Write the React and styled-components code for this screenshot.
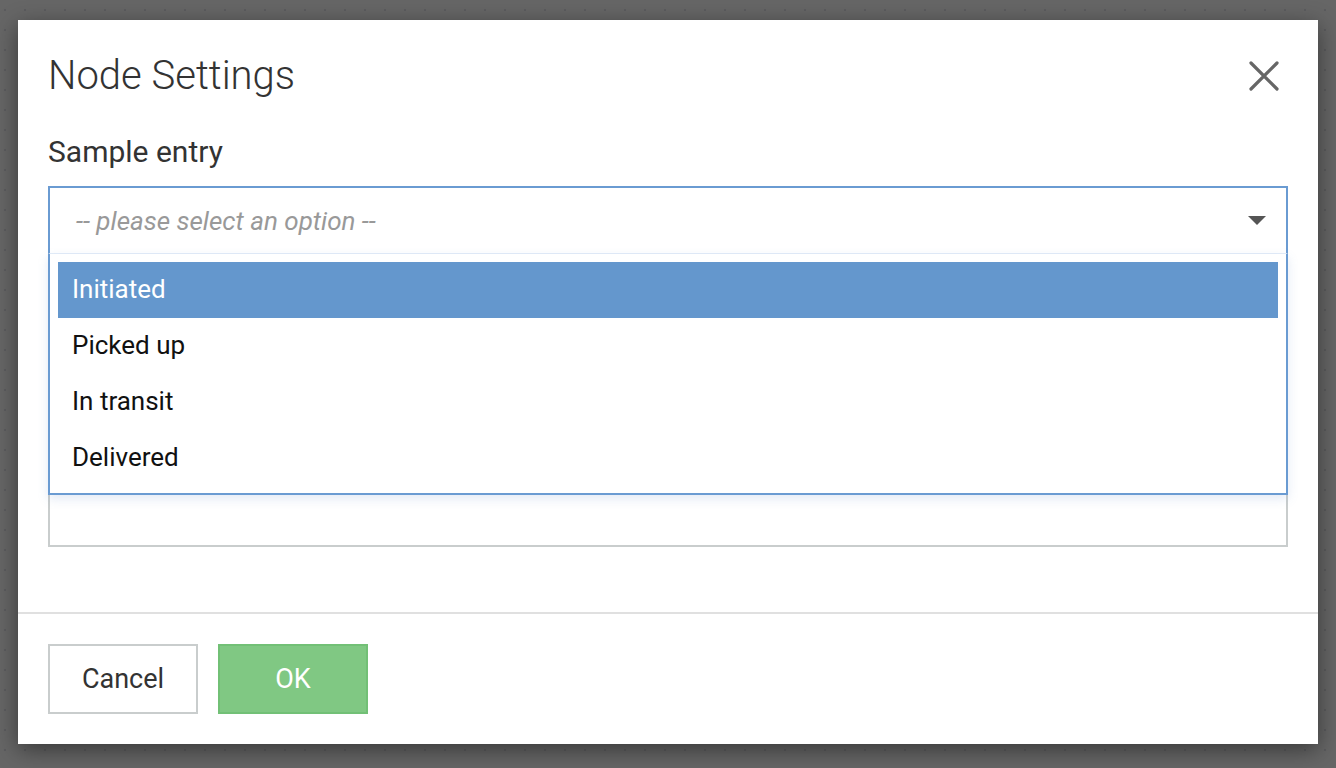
import React from 'react';
import styled, { createGlobalStyle } from 'styled-components';

const GlobalStyle = createGlobalStyle`
  html, body {
    margin: 0;
    padding: 0;
  }
  body {
    font-family: Roboto, 'Liberation Sans', sans-serif;
    background-color: #666666;
    background-image: radial-gradient(circle, #5b5b5e 1px, transparent 1.5px);
    background-size: 20px 20px;
    background-position: -5px 0;
    width: 1336px;
    height: 768px;
    overflow: hidden;
  }
`;

const Page = styled.div`
  padding: 20px 18px;
  box-sizing: border-box;
  height: 768px;
`;

const Dialog = styled.div`
  width: 1300px;
  height: 724px;
  background: #fff;
  box-shadow: 0 6px 22px rgba(0, 0, 0, 0.45);
  display: flex;
  flex-direction: column;
  box-sizing: border-box;
`;

const Body = styled.div`
  flex: 1;
  padding: 33px 30px 0;
`;

const Header = styled.div`
  display: flex;
  align-items: center;
  justify-content: space-between;
`;

const Title = styled.h1`
  margin: 0;
  font-size: 40px;
  line-height: 46px;
  font-weight: 300;
  color: #333;
`;

const CloseBtn = styled.button`
  border: none;
  background: none;
  padding: 0;
  margin-right: 8px;
  width: 32px;
  height: 32px;
  display: flex;
  align-items: center;
  justify-content: center;
  cursor: pointer;
`;

const Label = styled.div`
  margin-top: 35px;
  font-size: 30px;
  line-height: 35px;
  color: #333;
`;

const SelectWrap = styled.div`
  position: relative;
  margin-top: 17px;
`;

const Trigger = styled.div`
  height: 65px;
  border: 2px solid #6a9bd2;
  border-bottom: 1px solid ${(p) => (p.open ? '#e4edf8' : '#6a9bd2')};
  display: flex;
  align-items: center;
  justify-content: space-between;
  padding: 0 20px 0 26px;
  background: #fff;
`;

const Placeholder = styled.span`
  font-size: 26px;
  font-style: italic;
  color: #999;
  padding-top: 1px;
`;

const Caret = styled.span`
  width: 0;
  height: 0;
  border-left: 9px solid transparent;
  border-right: 9px solid transparent;
  border-top: 9px solid #555;
`;

const Menu = styled.ul`
  position: absolute;
  top: 100%;
  left: 0;
  right: 0;
  margin: 0;
  list-style: none;
  padding: 8px 8px 7px;
  background: #fff;
  border: 2px solid #6a9bd2;
  border-top: none;
  box-shadow: 0 4px 10px rgba(100, 140, 200, 0.18);
  z-index: 2;
`;

const Option = styled.li`
  height: 56px;
  box-sizing: border-box;
  display: flex;
  align-items: center;
  padding: 0 14px 2px;
  font-size: 26px;
  color: ${(p) => (p.active ? '#fff' : '#111')};
  background: ${(p) => (p.active ? '#6497cd' : 'transparent')};
`;

const FieldBox = styled.div`
  margin-top: 24px;
  height: 265px;
  border: 2px solid #c9cdcd;
`;

const Footer = styled.div`
  border-top: 2px solid #e0e0e0;
  padding: 30px 30px;
  display: flex;
  gap: 20px;
`;

const Button = styled.button`
  width: 150px;
  height: 70px;
  box-sizing: border-box;
  font-family: Roboto, 'Liberation Sans', sans-serif;
  font-size: 27px;
  cursor: pointer;
  border: 2px solid ${(p) => (p.primary ? '#72c076' : '#c9cdcd')};
  background: ${(p) => (p.primary ? '#80c883' : '#fff')};
  color: ${(p) => (p.primary ? '#fff' : '#333')};
`;

const options = ['Initiated', 'Picked up', 'In transit', 'Delivered'];

export default function App() {
  return (
    <>
      <GlobalStyle />
      <Page>
        <Dialog>
          <Body>
            <Header>
              <Title>Node Settings</Title>
              <CloseBtn aria-label='close'>
                <svg width='30' height='30' viewBox='0 0 30 30'>
                  <path
                    d='M2 2 L28 28 M28 2 L2 28'
                    stroke='#666'
                    strokeWidth='3.2'
                    strokeLinecap='round'
                  />
                </svg>
              </CloseBtn>
            </Header>
            <Label>Sample entry</Label>
            <SelectWrap>
              <Trigger open>
                <Placeholder>-- please select an option --</Placeholder>
                <Caret />
              </Trigger>
              <Menu>
                {options.map((o, i) => (
                  <Option key={o} active={i === 0}>
                    {o}
                  </Option>
                ))}
              </Menu>
            </SelectWrap>
            <FieldBox />
          </Body>
          <Footer>
            <Button>Cancel</Button>
            <Button primary>OK</Button>
          </Footer>
        </Dialog>
      </Page>
    </>
  );
}
